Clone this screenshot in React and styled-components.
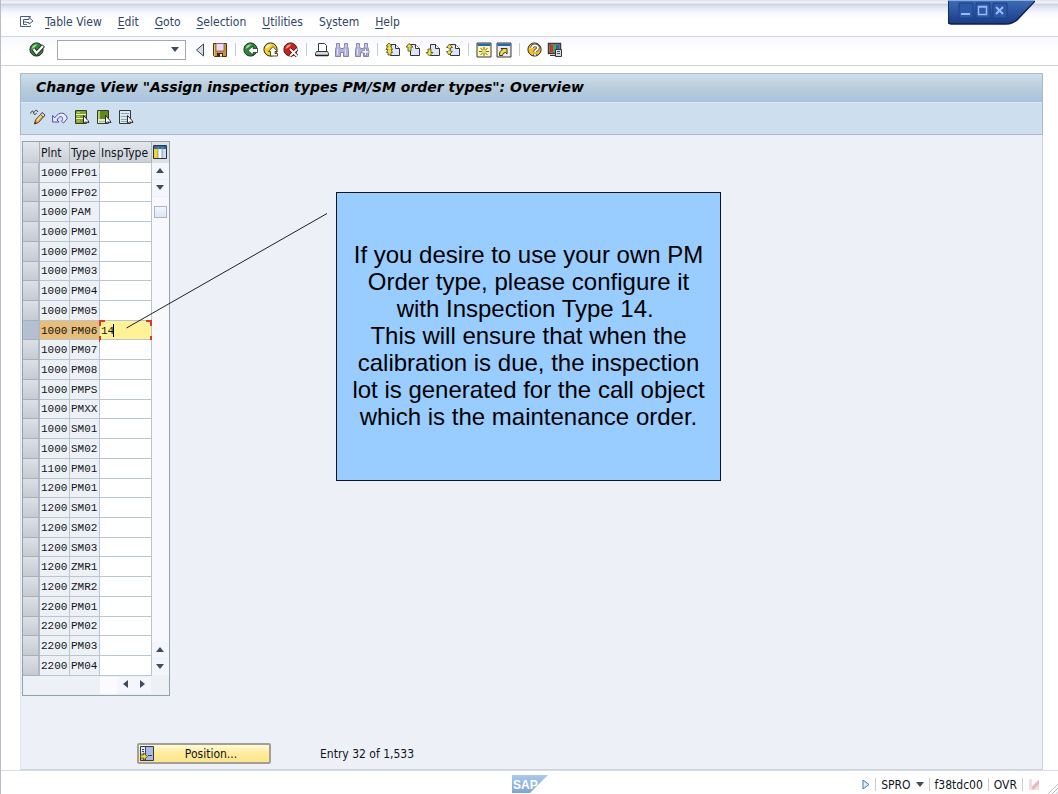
import React, { useState } from "react";
import styled, { createGlobalStyle, css } from "styled-components";

const GlobalStyle = createGlobalStyle`
  * {
    box-sizing: border-box;
  }
  body {
    margin: 0;
    background-color: #ffffff;
    color: #101418;
    font-family: "DejaVu Sans Condensed", "DejaVu Sans", sans-serif;
    font-size: 12px;
  }
  button, input {
    font: inherit;
    color: inherit;
  }
  svg {
    display: block;
  }
`;

const Page = styled.div`
  position: relative;
  display: flex;
  flex-direction: column;
  min-height: 100vh;
  border-left: 1px solid #b8bec8;
  background-color: #ffffff;
  overflow: hidden;
`;

const MenuBar = styled.nav`
  display: flex;
  align-items: center;
  gap: 16px;
  height: 37px;
  padding: 7px 0 0 19px;
  border-bottom: 1px solid #d3d7dd;
  background: linear-gradient(#dfe3ea 0, #f4f6fa 3px, #c9d2e8 4px, #e6eaf5 8px, #fafbff 14px, #ffffff 20px);
`;

const MenuIcon = styled.div`
  width: 14px;
  margin-right: -5px;
`;

const MenuItem = styled.button`
  padding: 0;
  border: 0;
  background: none;
  color: #2f4467;
  line-height: 14px;
  cursor: pointer;
  u {
    text-underline-offset: 2px;
  }
`;

const WindowControls = styled.div`
  position: absolute;
  top: 0;
  right: 23px;
`;

const ToolBar = styled.div`
  display: flex;
  align-items: center;
  height: 29px;
  padding: 0 0 3px 26px;
  border-bottom: 1px solid #cfd3d8;
  background: linear-gradient(#f7f8fd, #ffffff 14px);
`;

const ToolButton = styled.button`
  display: flex;
  align-items: center;
  justify-content: center;
  width: ${({ $wide }) => ($wide ? 22 : 20)}px;
  height: 20px;
  padding: 0;
  border: 0;
  background: none;
  cursor: pointer;
`;

const Separator = styled.span`
  width: 1px;
  height: 13px;
  margin: 0 5px;
  background-color: #b9cfe2;
`;

const CommandField = styled.div`
  display: flex;
  align-items: center;
  width: 129px;
  height: 20px;
  margin: 0 4px 0 10px;
  border: 1px solid #a2a6ad;
  background-color: #ffffff;
`;

const CommandInput = styled.input`
  flex: 1;
  min-width: 0;
  height: 100%;
  padding: 0 4px;
  border: 0;
  outline: 0;
  background: none;
`;

const Workspace = styled.main`
  position: relative;
  display: flex;
  flex-direction: column;
  flex: 1;
  margin: 7px 15px 0 19px;
`;

const TitleArea = styled.header`
  border: 1px solid #a9b8ca;
  background-color: #cddfee;
`;

const Title = styled.h1`
  height: 28px;
  margin: 0;
  padding: 0 15px;
  background: linear-gradient(#cfdeec, #b7cbdb 55%, #a7c3de);
  color: #000000;
  font-family: "DejaVu Sans", sans-serif;
  font-size: 14px;
  font-style: italic;
  font-weight: bold;
  line-height: 26px;
`;

const ActionBar = styled.div`
  display: flex;
  align-items: center;
  height: 32px;
  padding: 0 0 3px 6px;
  border-top: 1px solid #dbe8f3;
`;

const Content = styled.section`
  display: flex;
  flex-direction: column;
  flex: 1;
  align-items: flex-start;
  padding: 6px 0 5px 1px;
  border: 1px solid #cbd3e0;
  border-top: 0;
  border-left-color: #dfe4ee;
  background-color: #edf1f7;
`;

const TableFrame = styled.div`
  display: grid;
  grid-template-columns: 129px 17px;
  border: 1px solid #8fa3ae;
  background-color: #edf1f6;
`;

const Grid = styled.table`
  width: 129px;
  height: 534px;
  border-collapse: separate;
  border-spacing: 0;
  table-layout: fixed;
`;

const HeadCell = styled.th`
  width: ${({ $width }) => $width}px;
  height: 21px;
  padding: 2px 0 0 1px;
  border-right: 1px solid #a9b3bc;
  border-bottom: 1px solid #b4c0cb;
  background: linear-gradient(#e4e7ec, #cbd0d8);
  font-weight: normal;
  line-height: 14px;
  white-space: nowrap;
  text-align: left;
`;

const Row = styled.tr`
  font-family: "Liberation Mono", monospace;
  font-size: 11px;
  background-color: ${({ $selected }) => ($selected ? "#e8bd76" : "#edf1f6")};
`;

const cellBorder = css`
  border-right: 1px solid #b8c6d1;
  border-bottom: 1px solid #b8c6d1;
`;

const Cell = styled.td`
  ${cellBorder}
  padding: 1px 0 0 1px;
  line-height: 14px;
  white-space: nowrap;
`;

const SelectCell = styled.td`
  padding: 0;
  border-right: 2px solid #aebac7;
  border-bottom: 1px solid #a7b0ba;
  background: ${({ $selected }) =>
    $selected ? "#b4bfd2" : "linear-gradient(#dde0e6, #c6cad3)"};
`;

const RowButton = styled.button`
  display: block;
  width: 100%;
  height: 14px;
  padding: 0;
  border: 0;
  background: none;
`;

const InputCell = styled.td`
  ${cellBorder}
  position: relative;
  padding: 1px 0 0;
  background-color: ${({ $selected }) => ($selected ? "#fff296" : "#ffffff")};
`;

const TypeInput = styled.input`
  display: block;
  width: 100%;
  height: 14px;
  padding: 0 1px;
  border: 0;
  outline: 0;
  background: none;
`;

const FocusMark = styled.svg`
  position: absolute;
  top: -1px;
  left: -1px;
  pointer-events: none;
`;

const Caret = styled.span`
  position: absolute;
  top: 3px;
  left: 13px;
  width: 1px;
  height: 13px;
  background-color: #000000;
`;

const ScrollColumn = styled.div`
  display: flex;
  flex-direction: column;
  background-color: #f9f9fd;
`;

const ConfigButton = styled.button`
  display: flex;
  align-items: center;
  justify-content: center;
  height: 21px;
  padding: 0 1px 2px 0;
  border: 0;
  background-color: #dce1e8;
`;

const ArrowButton = styled.button`
  display: flex;
  align-items: center;
  justify-content: center;
  width: 17px;
  height: 17px;
  padding: 0 1px 2px 0;
  border: 0;
  border-bottom: 1px solid #edf0f6;
  background-color: #f5f6fb;
`;

const Thumb = styled.div`
  width: 13px;
  height: 12px;
  margin: 9px 0 auto 2px;
  border: 1px solid #a7b5c8;
  background: linear-gradient(#f2f7fb, #dce6ef);
`;

const ScrollRow = styled.div`
  display: flex;
  grid-column: 1 / -1;
  height: 19px;
  padding: 1px 18px 1px 0;
  justify-content: flex-end;
`;

const ScrollTrack = styled.div`
  width: 17px;
  background-color: #fbfbff;
`;

const Footer = styled.footer`
  display: flex;
  align-items: center;
  gap: 49px;
  margin-top: auto;
  padding-left: 115px;
`;

const PositionButton = styled.button`
  display: grid;
  grid-template-columns: 14px 1fr;
  align-items: center;
  width: 134px;
  height: 21px;
  padding: 0 1px;
  border: 2px solid #a19f98;
  border-radius: 2px;
  background: linear-gradient(#fff9d6, #ffeb9a 50%, #fbe48e);
  line-height: 14px;
  cursor: pointer;
`;

const Callout = styled.aside`
  position: absolute;
  top: 119px;
  left: 316px;
  display: flex;
  align-items: center;
  justify-content: center;
  width: 385px;
  height: 289px;
  padding-bottom: 2px;
  border: 1px solid #10161e;
  background-color: #99ccff;
  color: #000000;
  font-family: "Liberation Sans", Arial, sans-serif;
  font-size: 24px;
  line-height: 27px;
  text-align: center;
  white-space: nowrap;
`;

const Pointer = styled.svg`
  position: absolute;
  top: 140px;
  left: 106px;
  pointer-events: none;
`;

const StatusBar = styled.div`
  display: grid;
  grid-template-columns: 1fr auto 1fr;
  align-items: center;
  height: 24px;
  border-top: 1px solid #d6dbe4;
`;

const StatusInfo = styled.div`
  display: flex;
  align-items: center;
  justify-content: flex-end;
  gap: 5px;
  padding: 4px 0 0;
`;

const StatusDivider = styled.span`
  width: 1px;
  height: 13px;
  background-color: #c9ccd2;
`;

const Logo = styled.div`
  grid-column: 2;
  padding-top: 3px;
`;

const IconSvg = ({ children, size = 16 }) => (
  <svg width={size} height={size} viewBox="0 0 16 16" aria-hidden="true">
    {children}
  </svg>
);

const Ball = ({ color, light, children }) => (
  <IconSvg>
    <circle cx="7.5" cy="7.5" r="6.6" fill={color} stroke="#262b25" strokeWidth="1" />
    <path d="M2.5 7C3 4 5 2.2 8.5 2.2L6 5Z" fill={light} />
    {children}
  </IconSvg>
);

const EnterIcon = () => (
  <Ball color="#2c8a35" light="#9ddb97">
    <path d="M4.500 7l3 4L14.500 3.500" fill="none" stroke="#222" strokeWidth="4" />
    <path d="M4.500 7l3 4L14 4" fill="none" stroke="#fff" strokeWidth="2.2" />
  </Ball>
);

const BackIcon = () => (
  <Ball color="#2a8a33" light="#9ddb97">
    <path d="M5 8.500l5-4.500v2.500h4.500v4H10V13z" fill="#fff" stroke="#1d3a20" strokeWidth="0.8" />
  </Ball>
);

const ExitIcon = () => (
  <Ball color="#f3cf2a" light="#fff6b0">
    <path d="M10 4.500l4.500 5H12v2h2.500V14H7.500V9.500H5.500z" fill="#fff" stroke="#4a4012" strokeWidth="0.9" />
  </Ball>
);

const CancelIcon = () => (
  <Ball color="#cf1d1d" light="#ff9c91">
    <path d="M7 7l7 7M14 7l-7 7" stroke="#5b1010" strokeWidth="3.400" />
    <path d="M7 7l7 7M14 7l-7 7" stroke="#fff" strokeWidth="1.800" />
  </Ball>
);

const PreviousIcon = () => (
  <IconSvg>
    <path d="M11.500 2v12L4.500 8z" fill="#d8dde6" stroke="#3f454e" />
  </IconSvg>
);

const SaveIcon = () => (
  <IconSvg>
    <path d="M1.500 1.500h13v13h-12l-1-1z" fill="#d0913c" stroke="#4f3513" />
    <path d="M4 1.500h8v7.500H4z" fill="#ecdcf2" stroke="#7b5a68" strokeWidth="0.8" />
    <path d="M5 11h6v3.500H5z" fill="#3b2a1c" />
    <path d="M8 12h2v2.500H8z" fill="#f3ead6" />
    <path d="M2.500 2.500v11" stroke="#f3c169" />
  </IconSvg>
);

const PrintIcon = () => (
  <IconSvg>
    <path d="M4.500 9.500v-8h6l2 2v6" fill="#fff" stroke="#33363d" />
    <path d="M2.500 9.500h11l1 2v2h-13v-2z" fill="#d4d8e1" stroke="#33363d" />
    <path d="M2 13.500h12" stroke="#1d2024" strokeWidth="1.500" />
  </IconSvg>
);

const FindIcon = ({ more }) => (
  <IconSvg>
    <path
      d="M2.500 1.500h3v3l1 2h3l1-2v-3h3v3l1 3v7h-5v-4h-3v4h-5v-7l1-3z"
      fill="#b3b0dc"
      stroke="#8583ae"
    />
    <path d="M3.500 7v6M11.500 7v6M4 2v3M12 2v3" stroke="#e2e0f5" />
    {more && (
      <path d="M10.500 6.500h2v2h2.500v2.500h-2.500v2.500h-2V11H8V8.500h2.500z" fill="#f6f4ff" stroke="#8583ae" strokeWidth="0.8" />
    )}
  </IconSvg>
);

const pageArrows = {
  first: "M4 1L1 4h2L1 7.500h2L1.500 10.500H3V13h3v-2.500h1.500L6 7.500h1.500L5.500 4H7z",
  previous: "M4 1.500L1 5h2v4h3V5h2z",
  next: "M3 7v3.500H1L4.500 14 8 10.500H6V7z",
  last: "M4.500 2L1.500 5.500H3L5 7.500 3 9.500H1.500L4 13l3.500-3.500H6l-.500-2L6 5.500h1.500z",
};

const PageIcon = ({ kind }) => (
  <IconSvg>
    <path d="M5.500 2.500h5l4 4v7h-9z" fill="#dfe6f7" stroke="#30343c" />
    <path d="M10.500 2.500v4h4" fill="#fff" stroke="#30343c" />
    <path d={pageArrows[kind]} fill="#eee13c" stroke="#4a4520" strokeWidth="0.8" />
  </IconSvg>
);

const SessionIcon = ({ shortcut }) => (
  <IconSvg>
    <path d="M1 1h14v14H1z" fill={shortcut ? "#ececec" : "#fdf7b4"} stroke="#35383b" />
    <path d="M1.500 1.500h13V4h-13z" fill="#2865b0" />
    {shortcut ? (
      <path d="M3.500 13.500c0-4 1-5 3-5.500L5 6.500h6V12L9.500 10.500C7 11 7 11.500 6.500 13.500z" fill="#f1df38" stroke="#37341c" />
    ) : (
      <>
        <path d="M8 5v9M3 9.500h10M4.500 6l7 7M11.500 6l-7 7" stroke="#5c5320" strokeWidth="0.9" />
        <circle cx="8" cy="9.500" r="1.800" fill="#fbe54a" />
      </>
    )}
  </IconSvg>
);

const HelpIcon = () => (
  <Ball color="#f1c022" light="#fff9bd">
    <path d="M5 6c0-3.500 6-3.500 6 0 0 2-3 2-3 4M8 11.800v2" fill="none" stroke="#4a4a52" strokeWidth="3.400" />
    <path d="M5 6c0-3.500 6-3.500 6 0 0 2-3 2-3 4M8 11.800v1.700" fill="none" stroke="#fff" strokeWidth="1.800" />
  </Ball>
);

const LayoutIcon = () => (
  <IconSvg>
    <path d="M1.500 1.500h12v10h-12z" fill="#888" stroke="#3c3c40" strokeWidth="1.500" />
    <path d="M3 3h3v7H3z" fill="#e02a30" />
    <path d="M6 3h3v7H6z" fill="#2fb545" />
    <path d="M9 3h3v7H9z" fill="#3459c8" />
    <path d="M3 13.500h6" stroke="#333" />
    <path d="M8.500 7.500h6v7h-6z" fill="#d8dbe0" stroke="#34383e" />
    <path d="M10 9.500h3M10 11.500h3" stroke="#555" />
  </IconSvg>
);

const ChangeIcon = () => (
  <IconSvg>
    <path d="M.5 4.500c1-3 3-3 3-1s2 3 3 .500M3.500 4c2-4 4-3 4-1" fill="none" stroke="#32343b" />
    <path d="M12.500 3.500l2.500 2.500-6.500 7.500-4 1.500 1-4z" fill="#eca843" stroke="#573e22" />
    <path d="M7 11.500l6-7" stroke="#ffe3a8" strokeWidth="1.200" />
    <path d="M12 3.500l3 2.500-1.500 2-3-2.500z" fill="#e8eaee" stroke="#454854" />
    <path d="M4.500 15l.5-2 1.500 1z" fill="#202020" />
  </IconSvg>
);

const UndoIcon = () => (
  <IconSvg>
    <path
      d="M.6 6.500v6.500h6.400L5 11C6.500 8 9 6.500 10.300 8.500c.8 1.200 0 2.800-.8 3.700l2 1.800 3.800-4.500C14 3.500 7.500 1.500 2.800 8.800z"
      fill="#eceafd"
      stroke="#4c49a6"
    />
  </IconSvg>
);

const SheetIcon = ({ kind }) => (
  <IconSvg>
    <path d="M1.500 1.500h11v13h-11z" fill={kind === "none" ? "#dce8f0" : "#e3ecc4"} stroke="#353a35" />
    {kind === "all" && (
      <>
        <path d="M2 2h10v12H2z" fill="#7fa22c" />
        <path d="M2 5.500h10M2 9.500h10" stroke="#eaf2c4" />
        <path d="M3 3.500h3M3 7.500h3M3 12h3" stroke="#b7d15e" />
      </>
    )}
    {kind === "block" && (
      <>
        <path d="M2 2h10v8H2z" fill="#5f8a1a" />
        <path d="M2 2h2v8H2z" fill="#b4cc6c" />
        <path d="M3 12.500h6" stroke="#a9b6b0" />
      </>
    )}
    {kind === "none" && (
      <path d="M3 4.500h8M3 7.500h8M3 10.500h6M3 12.500h6" stroke="#8ea6b6" />
    )}
    <path d="M9.500 6.500v8l2-1.500 3.500.500-1-2z" fill="#fff" stroke="#292d30" />
  </IconSvg>
);

const Arrow = ({ direction = "down", width = 8 }) => {
  const paths = {
    down: "M0 0h8L4 5z",
    up: "M0 5h8L4 0z",
    left: "M6 0v8L1 4z",
    right: "M1 0v8l5-4z",
  };
  const sideways = direction === "left" || direction === "right";
  return (
    <svg width={width} height={sideways ? 8 : 5} viewBox={sideways ? "0 0 7 8" : "0 0 8 5"}>
      <path d={paths[direction]} fill="#3d4c60" />
    </svg>
  );
};

const menus = ["Table View", "Edit", "Goto", "Selection", "Utilities"];
const toolGroups = [
  [
    ["Back", <BackIcon />],
    ["Exit", <ExitIcon />],
    ["Cancel", <CancelIcon />],
  ],
  [
    ["Print", <PrintIcon />],
    ["Find", <FindIcon />],
    ["Find next", <FindIcon more />],
  ],
  [
    ["First page", <PageIcon kind="first" />],
    ["Previous page", <PageIcon kind="previous" />],
    ["Next page", <PageIcon kind="next" />],
    ["Last page", <PageIcon kind="last" />],
  ],
  [
    ["Create session", <SessionIcon />],
    ["Create shortcut", <SessionIcon shortcut />],
  ],
  [
    ["Help", <HelpIcon />],
    ["Customize layout", <LayoutIcon />],
  ],
];
const actions = [
  ["Display/Change", <ChangeIcon />],
  ["Undo", <UndoIcon />],
  ["Select all", <SheetIcon kind="all" />],
  ["Select block", <SheetIcon kind="block" />],
  ["Deselect all", <SheetIcon kind="none" />],
];
const orderTypes = [
  ["1000", "FP01 FP02 PAM PM01 PM02 PM03 PM04 PM05 PM06 PM07 PM08 PMPS PMXX SM01 SM02"],
  ["1100", "PM01"],
  ["1200", "PM01 SM01 SM02 SM03 ZMR1 ZMR2"],
  ["2200", "PM01 PM02 PM03 PM04"],
].flatMap(([plant, types]) => types.split(" ").map((type) => ({ plant, type })));

function OrderTypeTable() {
  const [selected, setSelected] = useState(8);
  const [inspTypes, setInspTypes] = useState({ 8: "14" });

  return (
    <TableFrame>
      <Grid>
        <thead>
          <tr>
            <HeadCell $width={17} aria-label="Select" />
            <HeadCell $width={30}>Plnt</HeadCell>
            <HeadCell $width={30}>Type</HeadCell>
            <HeadCell $width={52}>InspType</HeadCell>
          </tr>
        </thead>
        <tbody>
          {orderTypes.map(({ plant, type }, index) => {
            const isSelected = index === selected;
            return (
              <Row key={plant + type} $selected={isSelected}>
                <SelectCell $selected={isSelected}>
                  <RowButton
                    aria-label={`Select ${plant} ${type}`}
                    onClick={() => setSelected(index)}
                  />
                </SelectCell>
                <Cell>{plant}</Cell>
                <Cell>{type}</Cell>
                <InputCell $selected={isSelected}>
                  <TypeInput
                    aria-label={`InspType ${plant} ${type}`}
                    value={inspTypes[index] || ""}
                    onFocus={() => setSelected(index)}
                    onChange={(event) =>
                      setInspTypes({ ...inspTypes, [index]: event.target.value })
                    }
                  />
                  {isSelected && (
                    <>
                      <Caret />
                      <FocusMark width="53" height="22" viewBox="0 0 53 22">
                        <path
                          d="M1 6V1h5M47 1h5v5M1 16v5h5M47 21h5v-5"
                          fill="none"
                          stroke="#d5392f"
                          strokeWidth="2"
                        />
                      </FocusMark>
                    </>
                  )}
                </InputCell>
              </Row>
            );
          })}
        </tbody>
      </Grid>
      <ScrollColumn>
        <ConfigButton aria-label="Table settings">
          <IconSvg>
            <path d="M1.500 1.500h13v13h-13z" fill="#fff" stroke="#30343a" />
            <path d="M2 2h12v3H2z" fill="#3267a8" />
            <path d="M2 5h4v9H2z" fill="#f4d431" />
            <path d="M10 5h4v9h-4z" fill="#c7dff0" />
            <path d="M6 3v11M10 3v11" stroke="#8799a7" />
          </IconSvg>
        </ConfigButton>
        <ArrowButton aria-label="Scroll up"><Arrow direction="up" /></ArrowButton>
        <ArrowButton aria-label="Scroll down"><Arrow /></ArrowButton>
        <Thumb />
        <ArrowButton aria-label="Page up"><Arrow direction="up" /></ArrowButton>
        <ArrowButton aria-label="Page down"><Arrow /></ArrowButton>
      </ScrollColumn>
      <ScrollRow>
        <ScrollTrack />
        <ArrowButton aria-label="Scroll left"><Arrow direction="left" width={7} /></ArrowButton>
        <ArrowButton aria-label="Scroll right"><Arrow direction="right" width={7} /></ArrowButton>
      </ScrollRow>
    </TableFrame>
  );
}

function App() {
  const [command, setCommand] = useState("");

  return (
    <>
      <GlobalStyle />
      <Page>
        <MenuBar>
          <MenuIcon>
            <svg width="14" height="12" viewBox="0 0 14 12">
              <path d="M10.500 1.500v-1H.5v10h10v-1M3.500 3.500H9v-2l4 3.500-4 3V6.500H6.500M3.500 3.500v5h3.500M3.500 6h3" fill="none" stroke="#4a5c7c" />
            </svg>
          </MenuIcon>
          {menus.map((name) => (
            <MenuItem key={name}>
              <u>{name[0]}</u>
              {name.slice(1)}
            </MenuItem>
          ))}
          <MenuItem>
            S<u>y</u>stem
          </MenuItem>
          <MenuItem>
            <u>H</u>elp
          </MenuItem>
        </MenuBar>
        <WindowControls>
          <svg width="87" height="26" viewBox="0 0 87 26">
            <defs>
              <linearGradient id="tab" x1="0" y1="0" x2="0" y2="1">
                <stop offset="0" stopColor="#3f6cb8" />
                <stop offset="1" stopColor="#193b83" />
              </linearGradient>
            </defs>
            <path d="M0 0h87L70 19q-5 5-12 5H3q-3 0-3-3z" fill="url(#tab)" />
            <path d="M0 1v20q0 3 3 3h55q7 0 12-5L87 1" fill="none" stroke="#101f4b" strokeWidth="1.500" />
            <path d="M0 .5h87" stroke="#8eacd8" />
            <path d="M11 3h14v15H11zM28 3h14v15H28zM45 3h14v15H45z" fill="#2c58a6" stroke="#1b4088" />
            <path d="M13 14h9" stroke="#94b8fa" strokeWidth="2" />
            <path d="M30.500 6.500h8v8h-8zM30 7h9" fill="none" stroke="#94b8fa" strokeWidth="1.500" />
            <path d="M48 7l7 7M55 7l-7 7" stroke="#94b8fa" strokeWidth="2" />
          </svg>
        </WindowControls>
        <ToolBar>
          <ToolButton aria-label="Enter"><EnterIcon /></ToolButton>
          <CommandField>
            <CommandInput
              aria-label="Command"
              value={command}
              onChange={(event) => setCommand(event.target.value)}
            />
            <ToolButton aria-label="Command history"><Arrow /></ToolButton>
          </CommandField>
          <ToolButton aria-label="Previous"><PreviousIcon /></ToolButton>
          <ToolButton aria-label="Save"><SaveIcon /></ToolButton>
          {toolGroups.map((group, index) => (
            <React.Fragment key={index}>
              <Separator />
              {group.map(([name, icon]) => (
                <ToolButton key={name} aria-label={name}>{icon}</ToolButton>
              ))}
            </React.Fragment>
          ))}
        </ToolBar>
        <Workspace>
          <TitleArea>
            <Title>Change View "Assign inspection types PM/SM order types": Overview</Title>
            <ActionBar>
              {actions.map(([name, icon]) => (
                <ToolButton key={name} $wide aria-label={name}>{icon}</ToolButton>
              ))}
            </ActionBar>
          </TitleArea>
          <Content>
            <OrderTypeTable />
            <Footer>
              <PositionButton>
                <svg width="14" height="15" viewBox="0 0 14 15">
                  <path d="M.5.5h13v14H.5z" fill="#aeb9df" stroke="#30374d" />
                  <path d="M5.500 1v13M8 9.500h4" stroke="#39446c" />
                  <path d="M1 1h4v6H1z" fill="#e4e9f6" />
                  <path d="M2 3.500h2M2 5.500h2" stroke="#39446c" />
                  <path d="M.5 9h3V7l4 3.500-4 3.500v-2h-3z" fill="#f2df2d" stroke="#4b4515" strokeWidth="0.800" />
                </svg>
                <span>Position...</span>
              </PositionButton>
              <span>Entry 32 of 1,533</span>
            </Footer>
          </Content>
          <Callout>
            <span>
              If you desire to use your own PM<br />
              Order type, please configure it<br />
              with Inspection Type 14.&nbsp;<br />
              This will ensure that when the<br />
              calibration is due, the inspection<br />
              lot is generated for the call object<br />
              which is the maintenance order.
            </span>
          </Callout>
          <Pointer width="202" height="116" viewBox="0 0 202 116">
            <path d="M201 .5L.5 115" stroke="#1b2026" />
          </Pointer>
        </Workspace>
        <StatusBar>
          <Logo>
            <svg width="36" height="18" viewBox="0 0 36 18">
              <defs>
                <linearGradient id="sap" x1="0" y1="0" x2="0" y2="1">
                  <stop offset="0" stopColor="#a9c9ea" />
                  <stop offset="1" stopColor="#7fa4d2" />
                </linearGradient>
              </defs>
              <path d="M0 0h36L18 18H0z" fill="url(#sap)" />
              <text x="1" y="14" fill="#fff" fontFamily="Liberation Sans" fontSize="12" fontWeight="bold">SAP</text>
            </svg>
          </Logo>
          <StatusInfo>
            <svg width="8" height="11" viewBox="0 0 8 11">
              <path d="M1 1v9l6-4.500z" fill="#dcecf8" stroke="#4a7ca8" />
            </svg>
            <StatusDivider />
            <span>SPRO</span>
            <Arrow />
            <StatusDivider />
            <span>f38tdc00</span>
            <StatusDivider />
            <span>OVR</span>
            <StatusDivider />
            <svg width="30" height="18" viewBox="0 0 30 18">
              <path d="M1 3h3v7l7-7v11H1z" fill="#f7dcdd" />
              <path d="M4 11l7-7v4l-6 6z" fill="#e8b5b8" />
              <path d="M20 18L30 8M24 18l6-6M28 18l2-2" stroke="#b9bdc7" />
            </svg>
          </StatusInfo>
        </StatusBar>
      </Page>
    </>
  );
}

export default App;
